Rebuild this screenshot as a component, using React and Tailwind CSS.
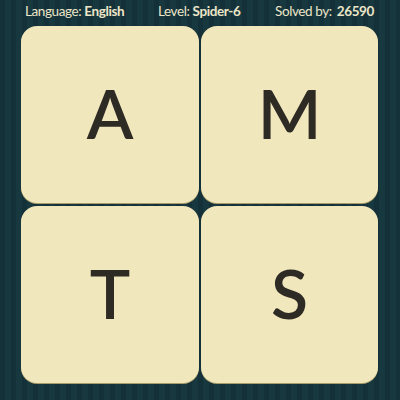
export default function App() {
  const letters = ["A", "M", "T", "S"];
  return (
    <div
      className="w-[400px] h-[400px] overflow-hidden bg-[repeating-linear-gradient(90deg,#14313a_0px,#14313a_5px,#18383f_5px,#18383f_11px)] flex flex-col"
      style={{ fontFamily: "Lato, 'Open Sans', sans-serif" }}
    >
      <div className="h-[24px] flex items-center pl-[25px] text-[13.5px] tracking-[-0.4px] text-[#ece6c8] leading-none">
        <span className="w-[133px]">
          Language: <span className="font-bold">English</span>
        </span>
        <span className="w-[117px]">
          Level: <span className="font-bold">Spider-6</span>
        </span>
        <span>
          Solved by: <span className="font-bold ml-[2px]">26590</span>
        </span>
      </div>
      <div className="grid grid-cols-[178px_177px] grid-rows-[177px_177px] gap-x-[2px] gap-y-[3px] ml-[21px] mt-[2px]">
        {letters.map((l) => (
          <div
            key={l}
            className="rounded-[16px] bg-[#f0e7bd] shadow-[0_1px_0_#a99c6a] flex items-center justify-center text-[#2e2a24] text-[68px] font-semibold leading-none"
          >
            <span className="-mt-[4px]">{l}</span>
          </div>
        ))}
      </div>
    </div>
  );
}
